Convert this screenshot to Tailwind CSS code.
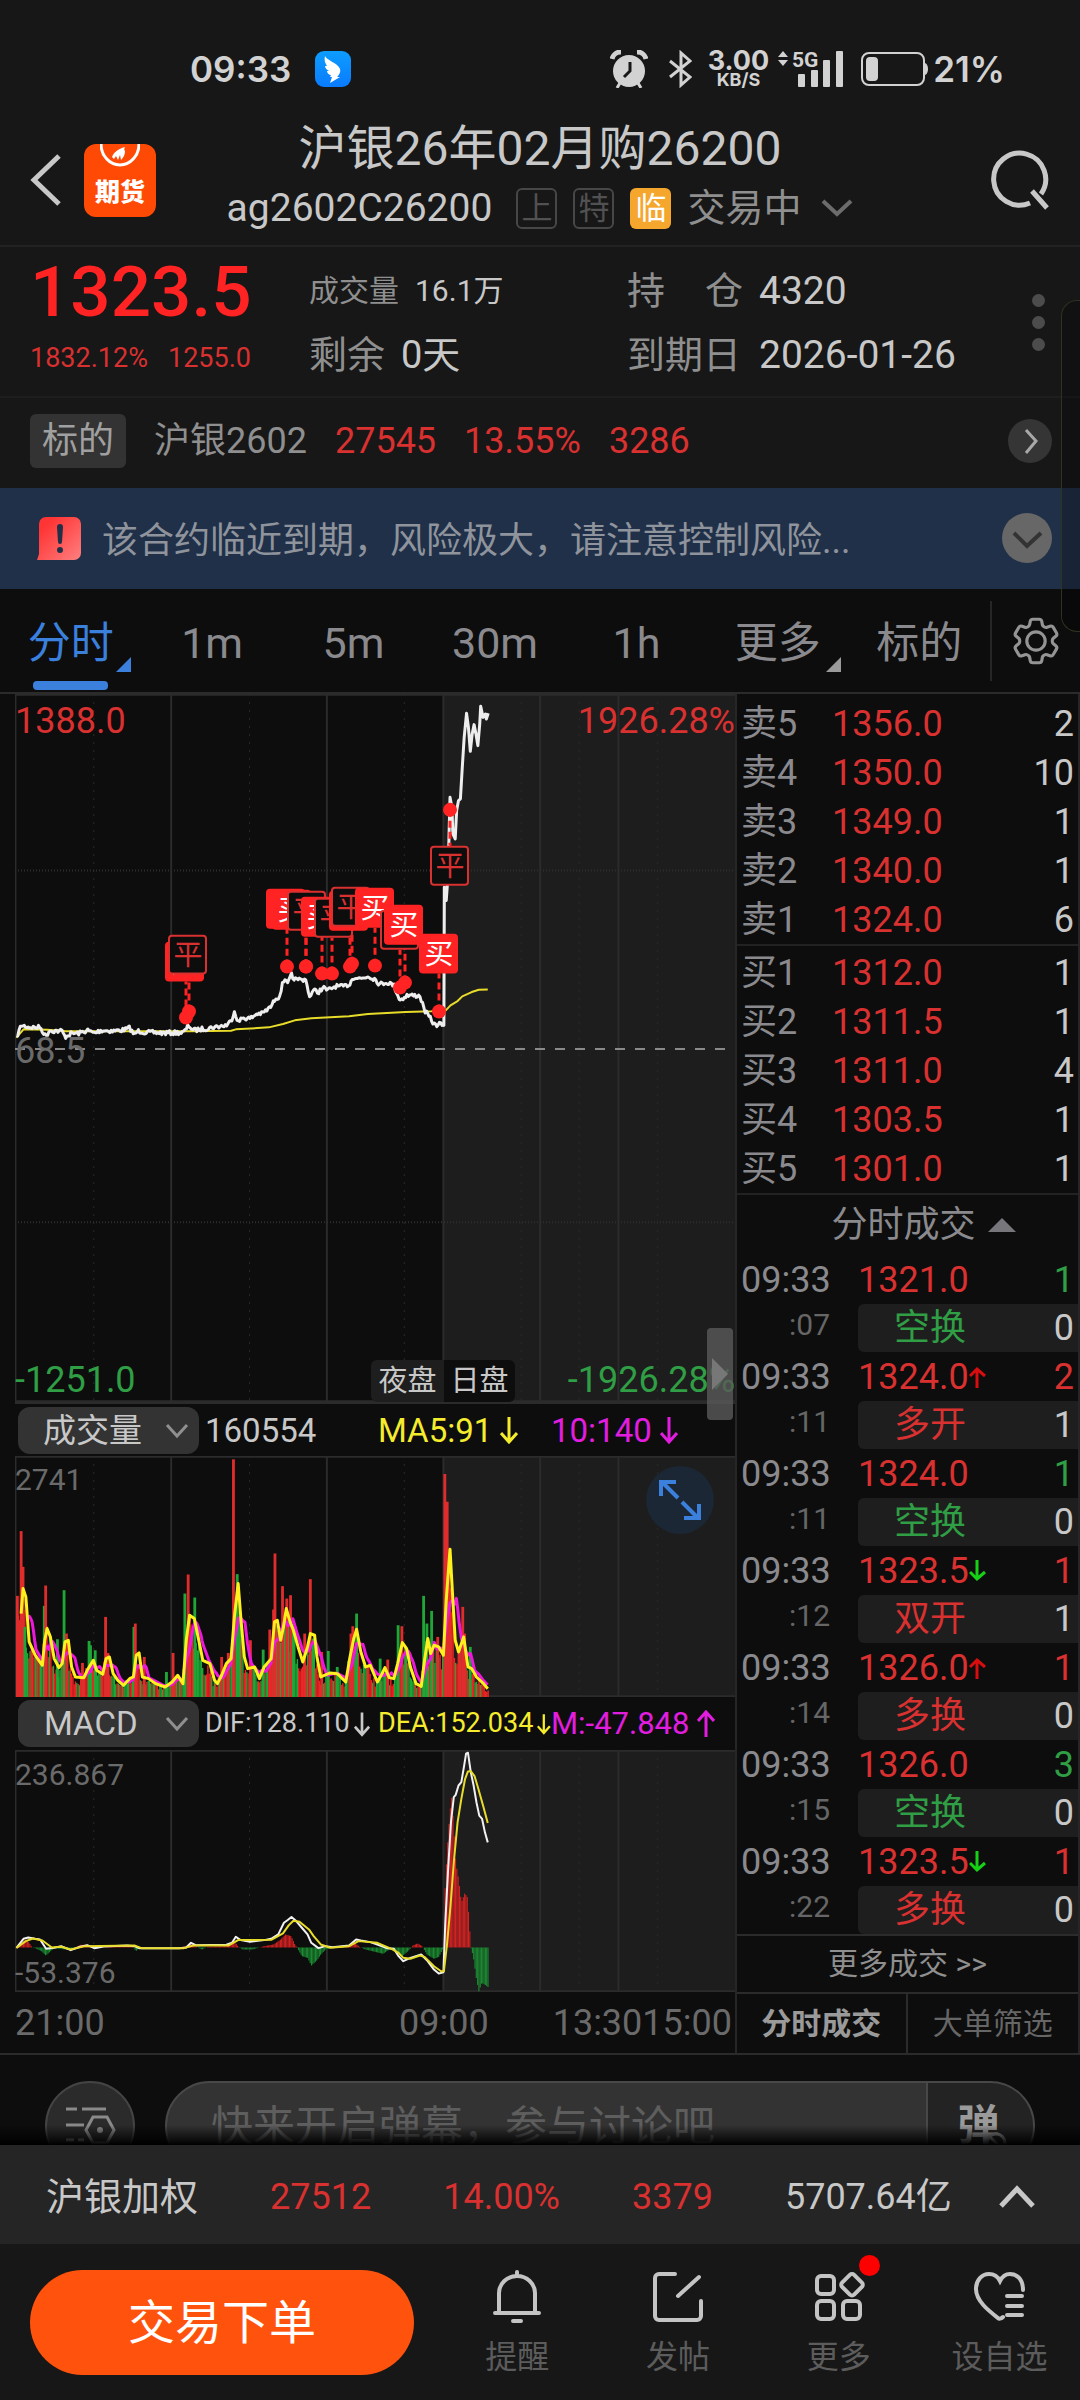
<!DOCTYPE html>
<html lang="zh-CN">
<head>
  <meta charset="UTF-8">
  <meta name="viewport" content="width=device-width, initial-scale=1.0">
  <title>沪银26年02月购26200</title>
  <script src="https://cdn.jsdelivr.net/npm/@tailwindcss/browser@4"></script>
</head>
<body class="relative bg-[#0d0d0d] font-['Roboto','Noto_Sans_CJK_SC',sans-serif] text-[36px] leading-none text-[#c8c8c8]">

  <!-- Status bar -->
  <div class="flex h-28 items-center justify-between bg-[#171717] pr-[75px] pl-[190px] pt-[26px] font-['Inter',sans-serif] font-semibold text-[#d2d2d2]">
    <div class="flex items-center gap-6">
      <span class="text-[35px]">09:33</span>
      <svg class="size-9" viewBox="0 0 36 36">
        <defs><linearGradient id="wing" x1="0" y1="0" x2="0" y2="1"><stop offset="0" stop-color="#0d9dff"/><stop offset="1" stop-color="#0a7bff"/></linearGradient></defs>
        <rect width="36" height="36" rx="9" fill="url(#wing)"/>
        <path d="M10 5c2 4 9 6 13 10 3 3 3 6 0 10l-1 1h3L15 32l2-6h-2l1-2c-2 0-4-2-4-4l2 0c-2-1-4-3-4-5l2 0C10 12 9 9 10 5z" fill="#fff"/>
      </svg>
    </div>
    <div class="flex items-center">
      <svg class="h-[38px] w-[38px]" viewBox="0 0 38 38">
        <circle cx="19" cy="21" r="16" fill="#d2d2d2"/>
        <path d="M2 9A9 9 0 0 1 11 2M36 9A9 9 0 0 0 27 2" fill="none" stroke="#d2d2d2" stroke-width="5"/>
        <path d="M10 33l-3 5M28 33l3 5" stroke="#d2d2d2" stroke-width="3"/>
        <path d="M20 12v9l-6 6" fill="none" stroke="#171717" stroke-width="3"/>
      </svg>
      <svg class="ml-5 h-[38px] w-[24px]" viewBox="0 0 24 38">
        <path d="M2 11l20 16-9 8V3l9 8L2 27" fill="none" stroke="#d2d2d2" stroke-width="3"/>
      </svg>
      <div class="ml-4 flex flex-col items-center">
        <span class="text-[27px] leading-[22px] font-bold">3.00</span>
        <span class="text-lg leading-4 font-bold">KB/S</span>
      </div>
      <svg class="ml-2 h-[38px] w-[68px] overflow-visible" viewBox="0 0 68 38">
        <path d="M6 1l5 6H1zM6 16l5-6H1z" fill="#d2d2d2"/>
        <text x="15" y="17" font-size="21" font-weight="700" fill="#d2d2d2" class="font-['Roboto',sans-serif]">5G</text>
        <rect x="21" y="24" width="7" height="13" rx="1" fill="#d2d2d2"/>
        <rect x="34" y="20" width="7" height="17" rx="1" fill="#d2d2d2"/>
        <rect x="46" y="10" width="7" height="27" rx="1" fill="#d2d2d2"/>
        <rect x="59" y="1" width="7" height="36" rx="1" fill="#d2d2d2"/>
      </svg>
      <svg class="ml-4 h-[36px] w-[68px]" viewBox="0 0 68 36">
        <rect x="1" y="2" width="62" height="32" rx="7" fill="none" stroke="#d2d2d2" stroke-width="2"/>
        <rect x="5" y="6" width="12" height="24" rx="4" fill="#d2d2d2"/>
        <path d="M64 12c4 1 4 11 0 12z" fill="#d2d2d2"/>
      </svg>
      <span class="ml-1 text-[35px]">21%</span>
    </div>
  </div>

  <!-- Title -->
  <header class="grid h-[135px] grid-cols-[1fr_auto_1fr] border-b-2 border-[#222] bg-[#171717] pt-[7px]">
    <div class="flex items-center gap-[22px] pb-1 pl-[30px]">
      <a href="#" aria-label="返回">
        <svg class="h-[54px] w-[32px]" viewBox="0 0 32 54" fill="none" stroke="#c8c8c8" stroke-width="5"><path d="M29 3L4 27l25 24"/></svg>
      </a>
      <div class="relative flex h-[73px] w-[72px] items-end justify-center rounded-xl bg-[#ff4a05] pb-3 text-[25px] font-black text-white">
        <svg class="absolute top-0 left-4 h-6 w-10" viewBox="0 0 40 24">
          <path d="M1 0a19 21 0 0 0 38 0" fill="none" stroke="#fff" stroke-width="3"/>
          <path d="M12 13c2-5 6-8 13-10-1 2-1 3 0 4 0 3-1 6-4 9l-1-5-2 5-2-4-2 3z" fill="#fff"/>
        </svg>
        期货
      </div>
    </div>
    <div class="flex flex-col items-center">
      <h1 class="flex h-[60px] items-center text-5xl">沪银26年02月购26200</h1>
      <div class="flex h-[58px] items-center">
        <span class="text-[39px]">ag2602C26200</span>
        <span class="ml-6 flex size-[41px] items-center justify-center rounded-md border-2 border-[#474747] text-[31px] text-[#515151]">上</span>
        <span class="ml-4 flex size-[41px] items-center justify-center rounded-md border-2 border-[#474747] text-[31px] text-[#515151]">特</span>
        <span class="ml-4 flex size-[41px] items-center justify-center rounded-md bg-[#f5a62c] text-[31px] text-white">临</span>
        <span class="ml-4 text-[38px] text-[#8f8f8f]">交易中</span>
        <svg class="ml-5 h-[20px] w-[32px]" viewBox="0 0 32 20" fill="none" stroke="#6c6c6c" stroke-width="4"><path d="M2 3l14 13L30 3"/></svg>
      </div>
    </div>
    <div class="flex items-center justify-end pr-[30px] pb-1">
      <button aria-label="搜索">
        <svg class="size-[60px]" viewBox="0 0 60 60" fill="none" stroke="#c8c8c8" stroke-width="5"><path d="M40 53A26 26 0 1 1 51 44M42 41l15 17"/></svg>
      </button>
    </div>
  </header>

  <!-- Quote summary -->
  <section class="flex h-[151px] border-b-2 border-[#1e1e1e] bg-[#171717] pt-3 pl-[30px]">
    <div class="w-[279px] text-[27px] text-[#d93030]">
      <div class="flex h-16 items-center text-[71px] font-medium text-[#ff2323]">1323.5</div>
      <div class="flex h-[70px] items-center gap-5"><span>1832.12%</span><span>1255.0</span></div>
    </div>
    <dl class="w-[318px]">
      <div class="flex h-16 items-center gap-4 text-[30px]"><dt class="text-[#8f8f8f]">成交量</dt><dd>16.1万</dd></div>
      <div class="flex h-16 items-center gap-4 text-[38px]"><dt class="text-[#8f8f8f]">剩余</dt><dd>0天</dd></div>
    </dl>
    <dl class="flex-1 text-[39px]">
      <div class="flex h-16 items-center gap-4"><dt class="flex w-[116px] justify-between text-[38px] text-[#8f8f8f]"><span>持</span><span>仓</span></dt><dd>4320</dd></div>
      <div class="flex h-16 items-center gap-4"><dt class="w-[116px] text-[38px] text-[#8f8f8f]">到期日</dt><dd>2026-01-26</dd></div>
    </dl>
    <button class="flex w-[84px] flex-col items-center gap-[9px] pt-[35px]" aria-label="更多信息">
      <span class="size-[13px] rounded-full bg-[#4c4c4c]"></span>
      <span class="size-[13px] rounded-full bg-[#4c4c4c]"></span>
      <span class="size-[13px] rounded-full bg-[#4c4c4c]"></span>
    </button>
  </section>

  <!-- Underlying -->
  <section class="flex h-[90px] items-center bg-[#171717] pr-[27px] pb-1 pl-[30px] text-[#d93030]">
    <span class="flex h-[54px] w-24 items-center justify-center rounded-md bg-[#333] text-[#a0a0a0]">标的</span>
    <span class="ml-7 text-[#8f8f8f]">沪银2602</span>
    <span class="ml-7">27545</span>
    <span class="ml-7">13.55%</span>
    <span class="ml-7">3286</span>
    <button class="ml-auto" aria-label="查看标的">
      <svg class="size-[45px]" viewBox="0 0 45 45"><circle cx="22" cy="22" r="22" fill="#353535"/><path d="M18 11l10 11-10 12" fill="none" stroke="#a8a8a8" stroke-width="3"/></svg>
    </button>
  </section>

  <!-- Risk notice -->
  <section class="flex h-[101px] items-center bg-[#203049] pr-[27px] pl-[36px] text-[#8f949c]">
    <svg class="h-[43px] w-[46px]" viewBox="0 0 46 43">
      <defs><linearGradient id="warn" x1="0" y1="0" x2="1" y2="1"><stop offset=".2" stop-color="#ff3535"/><stop offset="1" stop-color="#ff8080"/></linearGradient></defs>
      <path d="M10 0h28a7 7 0 0 1 7 7v29a7 7 0 0 1-7 7H1l2-6V7a7 7 0 0 1 7-7z" fill="url(#warn)"/>
      <path d="M21 10a3 3 0 0 1 6 0l-1 15a2 2 0 0 1-4 0z" fill="#203049"/><circle cx="24" cy="33" r="3" fill="#203049"/>
    </svg>
    <p class="ml-5 pt-1">该合约临近到期，风险极大，请注意控制风险...</p>
    <button class="ml-auto" aria-label="展开提示">
      <svg class="size-[51px]" viewBox="0 0 51 51"><circle cx="25" cy="25" r="25" fill="#676767"/><path d="M12 20l13 13 14-13" fill="none" stroke="#333" stroke-width="4"/></svg>
    </button>
  </section>

  <!-- Period tabs -->
  <nav class="flex h-[105px] items-center border-b-2 border-[#2b2b2b] text-[43px] text-[#8a8a8e]">
    <div class="grid h-full flex-1 grid-cols-7 pt-[30px] pb-6">
      <button class="relative text-[#3a80dc]">分时
        <svg class="absolute right-[10px] -bottom-1 size-[15px]" viewBox="0 0 15 15"><path d="M15 0v15H0z" fill="#3a80dc"/></svg>
        <span class="absolute -bottom-[22px] left-[33px] h-[9px] w-[75px] rounded bg-[#3a80dc]"></span>
      </button>
      <button>1m</button>
      <button>5m</button>
      <button>30m</button>
      <button>1h</button>
      <button class="relative">更多
        <svg class="absolute right-[8px] -bottom-1 size-[15px]" viewBox="0 0 15 15"><path d="M15 0v15H0z" fill="#9a9a9a"/></svg>
      </button>
      <button>标的</button>
    </div>
    <button class="flex h-20 w-[90px] items-center justify-center border-l-2 border-[#262626]" aria-label="设置">
      <svg class="size-[58px]" viewBox="0 0 24 24" fill="none" stroke="#949494" stroke-width="1.3">
        <path d="M9.594 3.94c.09-.542.56-.94 1.11-.94h2.593c.55 0 1.02.398 1.11.94l.213 1.281c.063.374.313.686.645.87.074.04.147.083.22.127.325.196.72.257 1.075.124l1.217-.456a1.125 1.125 0 0 1 1.37.49l1.296 2.247a1.125 1.125 0 0 1-.26 1.431l-1.003.827c-.293.241-.438.613-.43.992a7.723 7.723 0 0 1 0 .255c-.008.378.137.75.43.991l1.004.827c.424.35.534.955.26 1.43l-1.298 2.247a1.125 1.125 0 0 1-1.369.491l-1.217-.456c-.355-.133-.75-.072-1.076.124a6.47 6.47 0 0 1-.22.128c-.331.183-.581.495-.644.869l-.213 1.281c-.09.543-.56.94-1.11.94h-2.594c-.55 0-1.019-.398-1.11-.94l-.213-1.281c-.062-.374-.312-.686-.644-.87a6.52 6.52 0 0 1-.22-.127c-.325-.196-.72-.257-1.076-.124l-1.217.456a1.125 1.125 0 0 1-1.369-.49l-1.297-2.247a1.125 1.125 0 0 1 .26-1.431l1.004-.827c.292-.24.437-.613.43-.991a6.932 6.932 0 0 1 0-.255c.007-.38-.138-.751-.43-.992l-1.004-.827a1.125 1.125 0 0 1-.26-1.43l1.297-2.247a1.125 1.125 0 0 1 1.37-.491l1.216.456c.356.133.751.072 1.076-.124.072-.044.146-.086.22-.128.332-.183.582-.495.644-.869l.214-1.28Z"/>
        <circle cx="12" cy="12" r="3.8"/>
      </svg>
    </button>
  </nav>

  <main class="flex border-b-2 border-[#2b2b2b]">
    <!-- Charts -->
    <div class="flex-1 pl-[15px]">
      <div class="relative h-[708px]">
        <svg id="priceChart" class="h-full w-full" viewBox="32 340 1526 2126" preserveAspectRatio="none"></svg>
        <svg id="tradeFlags" class="absolute inset-0 h-full w-full" viewBox="0 0 720 709" preserveAspectRatio="none"></svg>
        <span class="absolute top-[9px] left-0 text-[#d93030]">1388.0</span>
        <span class="absolute top-[9px] right-0 text-[#d93030]">1926.28%</span>
        <span class="absolute top-[339px] left-0 text-[#6a6a6a]">68.5</span>
        <span class="absolute bottom-1 left-0 text-[#2f9e44]">-1251.0</span>
        <span class="absolute right-0 bottom-1 text-[#2f9e44]">-1926.28%</span>
        <div class="absolute right-[220px] bottom-0 flex h-[42px] text-[29px]">
          <span class="flex w-[73px] items-center justify-center rounded-l-md bg-[#1e1e1e]">夜盘</span>
          <span class="flex w-[71px] items-center justify-center rounded-r-md bg-[#0d0d0d]">日盘</span>
        </div>
        <button class="absolute right-[2px] -bottom-[18px] z-10 h-[92px] w-[26px] rounded-sm bg-[#5a5a5a]/80" aria-label="收起盘口">
          <svg class="mx-auto h-8 w-4" viewBox="0 0 16 32"><path d="M0 0l16 16L0 32z" fill="#777"/></svg>
        </button>
      </div>

      <div class="flex h-[54px] items-center border-t-2 border-[#2b2b2b] text-[33px]">
        <div class="relative ml-[3px] h-[47px] w-[181px] rounded-xl bg-[#333]">
          <select class="h-full w-full appearance-none pl-[25px]" aria-label="副图指标一"><option>成交量</option></select>
          <svg class="pointer-events-none absolute top-4 right-[10px] h-4 w-6" viewBox="0 0 24 16" fill="none" stroke="#8f8f8f" stroke-width="3"><path d="M2 2l10 11L22 2"/></svg>
        </div>
        <span class="ml-[6px] w-[173px]">160554</span>
        <span class="flex w-[173px] items-center gap-2 text-[#f5ec2e]">MA5:91
          <svg class="h-7 w-[18px]" viewBox="0 0 18 28" fill="none" stroke="currentColor" stroke-width="3"><path d="M9 1v25M1 17l8 9 8-9"/></svg>
        </span>
        <span class="flex items-center gap-2 text-[#e21de0]">10:140
          <svg class="h-7 w-[18px]" viewBox="0 0 18 28" fill="none" stroke="currentColor" stroke-width="3"><path d="M9 1v25M1 17l8 9 8-9"/></svg>
        </span>
      </div>

      <div class="relative h-[241px]">
        <svg id="volumeChart" class="h-full w-full" viewBox="32 168 1526 722" preserveAspectRatio="none"></svg>
        <span class="absolute top-[9px] left-0 text-[30px] text-[#6a6a6a]">2741</span>
        <button class="absolute top-[10px] right-[21px] flex size-[68px] items-center justify-center rounded-full bg-[#1b2735]" aria-label="全屏">
          <svg class="size-[42px]" viewBox="0 0 42 42" fill="none" stroke="#3a80dc" stroke-width="4"><path d="M2 17V3h15M3 3l16 16M40 25v14H25M39 39L23 23"/></svg>
        </button>
      </div>

      <div class="flex h-[53px] items-center text-[27px]">
        <div class="relative ml-[3px] h-[47px] w-[181px] rounded-xl bg-[#333] text-[33px]">
          <select class="h-full w-full appearance-none pl-[26px]" aria-label="副图指标二"><option>MACD</option></select>
          <svg class="pointer-events-none absolute top-4 right-[10px] h-4 w-6" viewBox="0 0 24 16" fill="none" stroke="#8f8f8f" stroke-width="3"><path d="M2 2l10 11L22 2"/></svg>
        </div>
        <span class="ml-[6px] flex w-[173px] items-center gap-1">DIF:128.110
          <svg class="h-7 w-4" viewBox="0 0 18 28" fill="none" stroke="currentColor" stroke-width="3"><path d="M9 1v25M1 17l8 9 8-9"/></svg>
        </span>
        <span class="flex w-[173px] items-center gap-1 text-[#f5ec2e]">DEA:152.034
          <svg class="h-7 w-4" viewBox="0 0 18 28" fill="none" stroke="currentColor" stroke-width="3"><path d="M9 1v25M1 17l8 9 8-9"/></svg>
        </span>
        <span class="flex items-center gap-2 text-[31px] text-[#e21de0]">M:-47.848
          <svg class="h-7 w-[18px]" viewBox="0 0 18 28" fill="none" stroke="currentColor" stroke-width="3"><path d="M9 27V2M1 11l8-9 8 9"/></svg>
        </span>
      </div>

      <div class="relative h-[242px]">
        <svg id="macdChart" class="h-full w-full" viewBox="32 184 1526 723" preserveAspectRatio="none"></svg>
        <span class="absolute top-[10px] left-0 text-[30px] text-[#6a6a6a]">236.867</span>
        <span class="absolute bottom-1 left-0 text-[30px] text-[#6a6a6a]">-53.376</span>
      </div>

      <div class="flex h-[61px] items-center text-[#6a6a6a]">
        <span class="w-[384px]">21:00</span>
        <span>09:00</span>
        <span class="ml-auto">13:30</span>
        <span class="mr-[3px]">15:00</span>
      </div>
    </div>

    <!-- Order book and trades -->
    <aside class="flex w-[345px] flex-col border-x-2 border-[#262626]">
      <div class="pt-[5px]">
        <table class="w-full"><tbody id="askRows"></tbody></table>
      </div>
      <div class="border-t-2 border-[#222] pt-[2px]">
        <table class="w-full"><tbody id="bidRows"></tbody></table>
      </div>
      <button class="flex h-[62px] items-center justify-center gap-3 border-t-2 border-[#222] pl-8 text-[#8a8a8e]">分时成交
        <svg class="h-[14px] w-[28px]" viewBox="0 0 28 14"><path d="M14 0l14 14H0z" fill="#77777b"/></svg>
      </button>
      <table class="w-full"><tbody id="tradeRows"></tbody></table>
      <a href="#" class="flex h-[60px] items-center justify-center border-y-2 border-[#2b2b2b] text-[30px] text-[#8f8f8f]">更多成交 &gt;&gt;</a>
      <div class="grid flex-1 grid-cols-2 text-[30px]">
        <button class="border-r-2 border-[#2b2b2b] font-bold text-[#9a9a9a]">分时成交</button>
        <button class="text-[#666]">大单筛选</button>
      </div>
    </aside>
  </main>

  <!-- Comment bar, partly under the dock -->
  <section class="relative flex h-[90px] items-start overflow-hidden pt-[26px] pr-[45px] pl-[45px]">
    <button class="flex size-[90px] shrink-0 items-center justify-center rounded-full border-2 border-[#444] bg-[#2b2b2b]" aria-label="弹幕设置">
      <svg class="h-[42px] w-[52px]" viewBox="0 0 52 42" fill="none" stroke="#8a8a8a" stroke-width="3"><path d="M2 4h11M18 4h24M2 20h18M2 35h8M14 35h6M29 12h14l7 13-7 13H29l-7-13z"/><circle cx="36" cy="25" r="3" fill="#8a8a8a" stroke="none"/></svg>
    </button>
    <div class="ml-[30px] flex h-[90px] flex-1 overflow-hidden rounded-full border-2 border-[#484848] bg-[#333]">
      <input class="min-w-0 flex-1 pl-11 text-[42px] placeholder:text-[#5e5e5e]" aria-label="弹幕" placeholder="快来开启弹幕，参与讨论吧">
      <button class="relative w-[107px] border-l-2 border-[#484848] bg-[#232323] pr-1 text-[42px] font-bold text-[#9a9a9a]">弹
        <svg class="absolute top-12 left-[56px] size-6" viewBox="0 0 24 24" fill="#232323" stroke="#8a8a8a" stroke-width="3"><circle cx="12" cy="12" r="9"/><path d="M6 6l12 12"/></svg>
      </button>
    </div>
    <div class="pointer-events-none absolute inset-x-0 bottom-0 h-5 bg-linear-to-t from-black to-transparent"></div>
  </section>

  <!-- Index quote -->
  <section class="flex h-[99px] items-center gap-[72px] bg-[#252525] pt-1 pr-[45px] pl-[46px] text-[#d93030]">
    <span class="text-[38px] text-[#c8c8c8]">沪银加权</span>
    <span>27512</span>
    <span>14.00%</span>
    <span>3379</span>
    <span class="text-[#c8c8c8]">5707.64亿</span>
    <button class="-ml-10 flex-1" aria-label="展开">
      <svg class="ml-auto h-6 w-[36px]" viewBox="0 0 36 24" fill="none" stroke="#c8c8c8" stroke-width="5"><path d="M2 21L18 4l16 17"/></svg>
    </button>
  </section>

  <!-- Dock -->
  <footer class="flex h-[156px] bg-[#171717] pt-[26px] pl-[30px] text-[32px] text-[#5c5c5c]">
    <button class="h-[105px] w-[384px] rounded-full bg-[#ff530d] text-[47px] text-white">交易下单</button>
    <div class="ml-[23px] grid flex-1 grid-cols-4">
      <a href="#" class="flex flex-col items-center gap-[17px]">
        <svg class="size-[54px]" viewBox="0 0 54 54" fill="none" stroke="#c4c4c4" stroke-width="4" stroke-linecap="round"><path d="M27 2v4M9 42V23a18 17 0 0 1 36 0v19M5 43h44M23 51h8"/></svg>
        提醒
      </a>
      <a href="#" class="flex flex-col items-center gap-[17px]">
        <svg class="size-[54px]" viewBox="0 0 54 54" fill="none" stroke="#c4c4c4" stroke-width="4" stroke-linecap="round"><path d="M24 4H8a4 4 0 0 0-4 4v38a4 4 0 0 0 4 4h38a4 4 0 0 0 4-4V31M48 7L27 26"/></svg>
        发帖
      </a>
      <a href="#" class="relative flex flex-col items-center gap-[17px]">
        <svg class="size-[54px]" viewBox="0 0 54 54" fill="none" stroke="#c4c4c4" stroke-width="4"><rect x="5" y="6" width="17" height="18" rx="4"/><rect x="5" y="31" width="17" height="18" rx="4"/><rect x="31" y="31" width="17" height="18" rx="4"/><rect x="32" y="6" width="17" height="17" rx="3" transform="rotate(45 40 14)"/></svg>
        更多
        <span class="absolute -top-[15px] left-[100px] size-[21px] rounded-full bg-[#ff0000]"></span>
      </a>
      <a href="#" class="flex flex-col items-center gap-[17px]">
        <svg class="size-[54px]" viewBox="0 0 54 54" fill="none" stroke="#c4c4c4" stroke-width="4" stroke-linecap="round"><path d="M50 20C50 8 43 4 37 4c-5 0-8 3-10 7C25 7 22 4 16 4 9 4 3 10 3 19c0 12 13 22 22 29 1 1 3 1 5-1M34 26h15M34 36h15M34 45h15"/></svg>
        设自选
      </a>
    </div>
  </footer>

  <!-- Edge panel -->
  <div class="pointer-events-none absolute top-[300px] right-0 h-[332px] w-[19px] rounded-l-2xl border border-r-0 border-[#2c3320] bg-black/25"></div>

  <script>
    const RED = '#ff2323';
    const GREEN = '#1fa637';

    const asks = [['卖5', '1356.0', 2], ['卖4', '1350.0', 10], ['卖3', '1349.0', 1], ['卖2', '1340.0', 1], ['卖1', '1324.0', 6]];
    const bids = [['买1', '1312.0', 1], ['买2', '1311.5', 1], ['买3', '1311.0', 4], ['买4', '1303.5', 1], ['买5', '1301.0', 1]];

    function renderBook(id, rows) {
      document.getElementById(id).innerHTML = rows.map(([name, price, qty]) => `
        <tr class="h-[49px]">
          <td class="w-[95px] pl-1 text-[#8a8a8e]">${name}</td>
          <td class="text-[#d93030]">${price}</td>
          <td class="pr-1 text-right">${qty}</td>
        </tr>`).join('');
    }
    renderBook('askRows', asks);
    renderBook('bidRows', bids);

    // second, price, direction, qty, qty colour, kind, kind colour, position change
    const trades = [
      ['07', '1321.0', '', 1, 'g', '空换', 'g', 0],
      ['11', '1324.0', 'up', 2, 'r', '多开', 'r', 1],
      ['11', '1324.0', '', 1, 'g', '空换', 'g', 0],
      ['12', '1323.5', 'down', 1, 'r', '双开', 'r', 1],
      ['14', '1326.0', 'up', 1, 'r', '多换', 'r', 0],
      ['15', '1326.0', '', 3, 'g', '空换', 'g', 0],
      ['22', '1323.5', 'down', 1, 'r', '多换', 'r', 0],
    ];
    const tone = { r: 'text-[#d93030]', g: 'text-[#2f9e44]' };
    const arrows = {
      '': '',
      up: '<svg class="h-[22px] w-[17px]" viewBox="0 0 17 22" fill="none" stroke="#d80d0d" stroke-width="3"><path d="M8 22V3M1 10l7-7 8 7"/></svg>',
      down: '<svg class="h-[22px] w-[17px]" viewBox="0 0 17 22" fill="none" stroke="#16d016" stroke-width="3"><path d="M8 0v19M1 12l7 7 8-7"/></svg>',
    };
    document.getElementById('tradeRows').innerHTML = trades.map(t => `
      <tr class="h-[49px]">
        <td class="w-[121px] pl-1 text-[#8a8a8e]">09:33</td>
        <td class="text-[#d93030]"><span class="flex items-center">${t[1]}${arrows[t[2]]}</span></td>
        <td class="pr-1 text-right ${tone[t[4]]}">${t[3]}</td>
      </tr>
      <tr class="h-12">
        <td class="pr-7 text-right align-top text-[30px] leading-[42px] text-[#666]">:${t[0]}</td>
        <td class="rounded-l-md bg-[#1e1e1e] pl-9 ${tone[t[6]]}">${t[5]}</td>
        <td class="bg-[#1e1e1e] pr-1 text-right">${t[7]}</td>
      </tr>`).join('');

    // Charts
    let seed = 7;
    function rand() {
      seed = (seed * 16807) % 2147483647;
      return seed / 2147483647;
    }
    function parse(s) {
      return s.trim().split(/\s+/).map(p => p.split(',').map(Number));
    }
    function valueAt(pts, x) {
      if (x <= pts[0][0]) return pts[0][1];
      for (let i = 1; i < pts.length; i++) {
        if (x <= pts[i][0]) {
          const [x0, y0] = pts[i - 1];
          const [x1, y1] = pts[i];
          return y0 + (y1 - y0) * (x - x0) / (x1 - x0);
        }
      }
      return pts[pts.length - 1][1];
    }
    function line(pts, color, width) {
      return `<polyline points="${pts.map(p => p.join(',')).join(' ')}" fill="none" stroke="${color}" stroke-width="${width}" stroke-linejoin="round" vector-effect="non-scaling-stroke"/>`;
    }
    function grid(top, bottom) {
      const v = (x, c, d) => `<line x1="${x}" x2="${x}" y1="${top}" y2="${bottom}" stroke="${c}" stroke-width="${d ? 1 : 2}" ${d ? 'stroke-dasharray="2 6"' : ''} vector-effect="non-scaling-stroke"/>`;
      return `<rect x="940" y="${top}" width="618" height="${bottom - top}" fill="#1d1d1d"/>`
        + [33, 363, 693, 940, 1145, 1311].map(x => v(x, '#2b2b2b')).join('')
        + [199, 529, 857, 1105, 1228, 1394].map(x => v(x, '#2a2a2a', true)).join('')
        + [top + 2, bottom - 2].map(y => `<line x1="32" x2="1558" y1="${y}" y2="${y}" stroke="#2b2b2b" stroke-width="2" vector-effect="non-scaling-stroke"/>`).join('');
    }

    const price = parse(`35,1372 45,1335 60,1340 75,1342 85,1340 97,1368 105,1350 120,1352 132,1352 138,1370 150,1360 170,1358 185,1350 200,1358 215,1350
      240,1352 265,1348 275,1342 285,1364 292,1352 310,1356 345,1358 370,1357 390,1356 400,1335 410,1350 430,1346 455,1340 480,1335 490,1322 497,1292
      505,1325 515,1312 530,1315 545,1300 555,1300 565,1290 575,1278 585,1252 592,1250 600,1205 605,1195 612,1205 618,1182 622,1208 630,1190 638,1202
      650,1198 655,1250 665,1230 675,1235 685,1222 695,1230 710,1218 730,1218 742,1210 748,1190 765,1195 780,1188 795,1195 805,1212 820,1205 835,1215
      848,1260 862,1245 890,1246 900,1290 915,1320 922,1335 932,1330 939,1335`);
    const daySession = parse(`941,1335 942,920 946,960 950,880 952,760 954,650 958,680 960,760 965,775 968,690 972,660 976,655 980,560 984,470 989,398
      993,440 997,512 1001,460 1005,432 1009,460 1013,495 1017,430 1019,377 1024,410 1029,400 1031,415 1035,398`);
    const average = parse(`35,1372 50,1347 100,1348 140,1353 300,1353 400,1353 490,1351 500,1347 570,1341 600,1331 625,1320 660,1314 740,1308 780,1301
      860,1295 915,1293 945,1290 955,1275 970,1262 980,1248 1000,1235 1015,1228 1034,1227`);
    const ticks = [];
    for (let x = 35; x < 940; x += 2.75) ticks.push([x, Math.round(valueAt(price, x) + (rand() - 0.5) * 13)]);
    document.getElementById('priceChart').innerHTML = grid(340, 2466)
      + [870, 1926].map(y => `<line x1="32" x2="1558" y1="${y}" y2="${y}" stroke="#2e2e2e" stroke-width="2" stroke-dasharray="1 2" vector-effect="non-scaling-stroke"/>`).join('')
      + '<line x1="32" x2="1540" y1="1406" y2="1406" stroke="#8a8a8a" stroke-width="2" stroke-dasharray="10 10" vector-effect="non-scaling-stroke"/>'
      + line(average, '#e8dc2a', 2)
      + line(ticks.concat(daySession), '#eeeeee', 3);

    // x, y of the flag, filled or not, x and y of the dot
    const flags = [
      [150, 248, 1, 171, 324], [153, 241, 0, 174, 318],
      [251, 195, 1, 272, 273], [257, 196, 1, 291, 273], [272, 197, 0, 291, 273],
      [286, 203, 1, 307, 280], [299, 204, 0, 317, 280],
      [314, 197, 1, 335, 273], [316, 193, 0, 337, 270],
      [340, 194, 1, 360, 272],
      [365, 216, 0, 385, 294], [369, 211, 1, 390, 289],
      [404, 240, 1, 424, 318], [415, 152, 0, 435, 116],
    ];
    document.getElementById('tradeFlags').innerHTML = flags.map(([x, y, filled, dx, dy]) => `
      <line x1="${dx}" x2="${dx}" y1="${dy}" y2="${dy > y ? y + 40 : y}" stroke="${RED}" stroke-width="3" stroke-dasharray="7 4"/>
      <circle cx="${dx}" cy="${dy}" r="7" fill="${RED}"/>`).join('')
      + flags.map(([x, y, filled]) => `
      <rect x="${x + 1}" y="${y + 1}" width="37" height="38" rx="3" fill="${filled ? RED : '#0d0d0d'}" stroke="${filled ? RED : '#d93030'}" stroke-width="2"/>
      <text x="${x + 20}" y="${y + 30}" font-size="29" text-anchor="middle" fill="${filled ? '#fff' : '#d93030'}">${filled ? '买' : '平'}</text>`).join('');

    // Volume
    const ma5 = parse(`45,640 49,565 55,590 62,725 75,765 90,795 95,720 100,685 107,710 115,775 125,802 132,790 138,725 145,720 152,800 160,830 178,832
      185,810 198,780 205,810 218,822 225,775 232,770 240,820 250,840 262,855 275,835 283,830 289,765 295,758 302,830 315,835 330,850 350,860 365,845
      377,825 388,850 395,720 402,645 412,655 420,710 430,780 445,790 455,840 461,850 470,825 480,790 490,775 497,650 505,550 511,660 518,770 525,805
      540,800 550,835 560,800 575,775 582,665 588,660 595,720 601,680 607,625 615,665 622,690 632,740 642,785 652,740 658,700 667,705 672,770 680,830
      700,818 715,820 733,845 742,770 750,715 756,687 765,755 775,800 785,795 800,845 810,820 816,802 825,832 835,835 843,790 853,727 862,745 870,800
      882,850 893,858 900,780 907,715 913,760 920,735 930,740 940,765 946,600 954,447 960,600 965,720 972,755 983,710 992,800 1000,805 1010,830
      1025,850 1034,865`);
    const spikes = 'r37,587 r41,660 r45,393 r49,500 g53,680 g94,617 r97,556 g122,717 g136,570 r141,700 r175,788 g189,722 g192,735 g202,750 r224,650 r229,758 g284,680 r287,670 r306,770 g353,815 r367,758 g392,580 r399,523 r402,650 g413,592 r470,770 r484,758 r495,178 g503,522 g508,650 r531,720 g558,748 r572,688 r580,628 r583,460 r590,690 r599,558 r608,595 r616,585 g622,670 r646,700 r658,537 g664,715 r682,755 g696,752 g715,800 r744,700 r748,678 g756,640 g806,775 r822,778 g844,675 r852,678 g860,740 g898,587 g905,670 g915,632 r928,710 r943,222 r948,305 r951,560 r955,700 r975,740 r981,620 r985,700 g997,740'
      .split(' ').map(s => [s[0], ...s.slice(1).split(',').map(Number)]);
    const bar = (x, y0, y1, color, w) => `<rect x="${x.toFixed(1)}" y="${Math.min(y0, y1).toFixed(1)}" width="${w}" height="${Math.abs(y1 - y0).toFixed(1)}" fill="${color}"/>`;
    let bars = '';
    for (let x = 35; x < 1034; x += 2.75) {
      const h = (890 - valueAt(ma5, x + 4)) * (0.6 + rand() * 0.5);
      const red = rand() < (x > 940 ? 0.8 : 0.5);
      bars += bar(x, 890 - h, 890, red ? '#f02424' : GREEN, 3);
    }
    bars += spikes.map(([c, x, y]) => bar(x - 3, y, 890, c === 'r' ? '#e02c2c' : GREEN, 6)).join('');
    const ma10 = [];
    for (let x = 60; x <= 1034; x += 2.75) ma10.push([x, (valueAt(ma5, x) + valueAt(ma5, x - 14)) / 2]);
    document.getElementById('volumeChart').innerHTML = grid(168, 890) + bars + line(ma10, '#ee18dc', 3) + line(ma5, '#fff01e', 3);

    // MACD
    const dif = parse(`35,775 50,748 60,744 75,748 85,750 98,778 115,775 130,770 150,782 170,772 185,767 200,776 220,771 270,768 285,770 295,776 380,776
      395,774 405,760 415,767 480,766 492,760 500,742 510,752 530,757 560,752 575,748 590,735 602,700 610,692 618,683 628,695 640,715 652,735 660,760
      675,776 690,770 705,773 740,768 755,750 765,753 785,758 800,765 820,776 835,778 845,800 855,815 870,805 893,795 905,812 920,840 930,852 940,848
      944,700 950,540 956,400 962,325 966,318 972,290 978,280 984,230 988,195 992,192 998,250 1004,290 1010,340 1016,380 1022,390 1028,430 1034,460`);
    const dea = parse(`35,775 55,755 70,747 90,753 110,774 130,772 150,780 180,770 285,768 300,776 390,776 410,768 485,768 505,752 575,751 600,732 612,708
      622,694 635,697 655,720 665,740 680,765 700,775 740,770 760,755 800,760 830,778 845,790 855,805 870,808 890,798 900,802 920,830 935,845 941,845
      948,760 955,650 962,520 970,400 978,330 986,270 992,248 998,247 1006,262 1014,300 1024,350 1034,402`);
    const hist = parse(`35,774 45,760 55,750 62,760 68,774 75,776 88,785 97,798 105,788 115,776 150,782 160,774 170,766 185,766 195,775 200,778 215,774
      275,768 283,774 288,785 295,776 385,773 398,768 405,757 412,770 428,780 440,772 480,770 497,755 505,772 515,780 535,780 560,770 580,765 595,750
      605,735 617,740 625,765 632,780 640,800 652,805 660,828 672,812 680,795 690,780 700,776 740,768 752,760 762,772 775,780 812,793 825,780 840,782
      852,800 865,785 875,768 885,762 895,770 905,795 920,808 930,802 938,780 941,774 943,610 948,480 953,380 957,322 961,400 966,520 972,570 978,640
      985,612 991,625 995,710 998,774 1003,800 1010,870 1015,905 1021,880 1028,885 1034,892`);
    let histBars = '';
    for (let x = 35; x < 1034; x += 2.75) {
      const y = valueAt(hist, x + 1);
      histBars += bar(x, 774, y, y < 774 ? '#d42222' : '#1c8a32', 2.4);
    }
    document.getElementById('macdChart').innerHTML = grid(184, 907) + histBars + line(dif, '#f2f2f2', 2) + line(dea, '#e8dc2a', 2);
  </script>
</body>
</html>
